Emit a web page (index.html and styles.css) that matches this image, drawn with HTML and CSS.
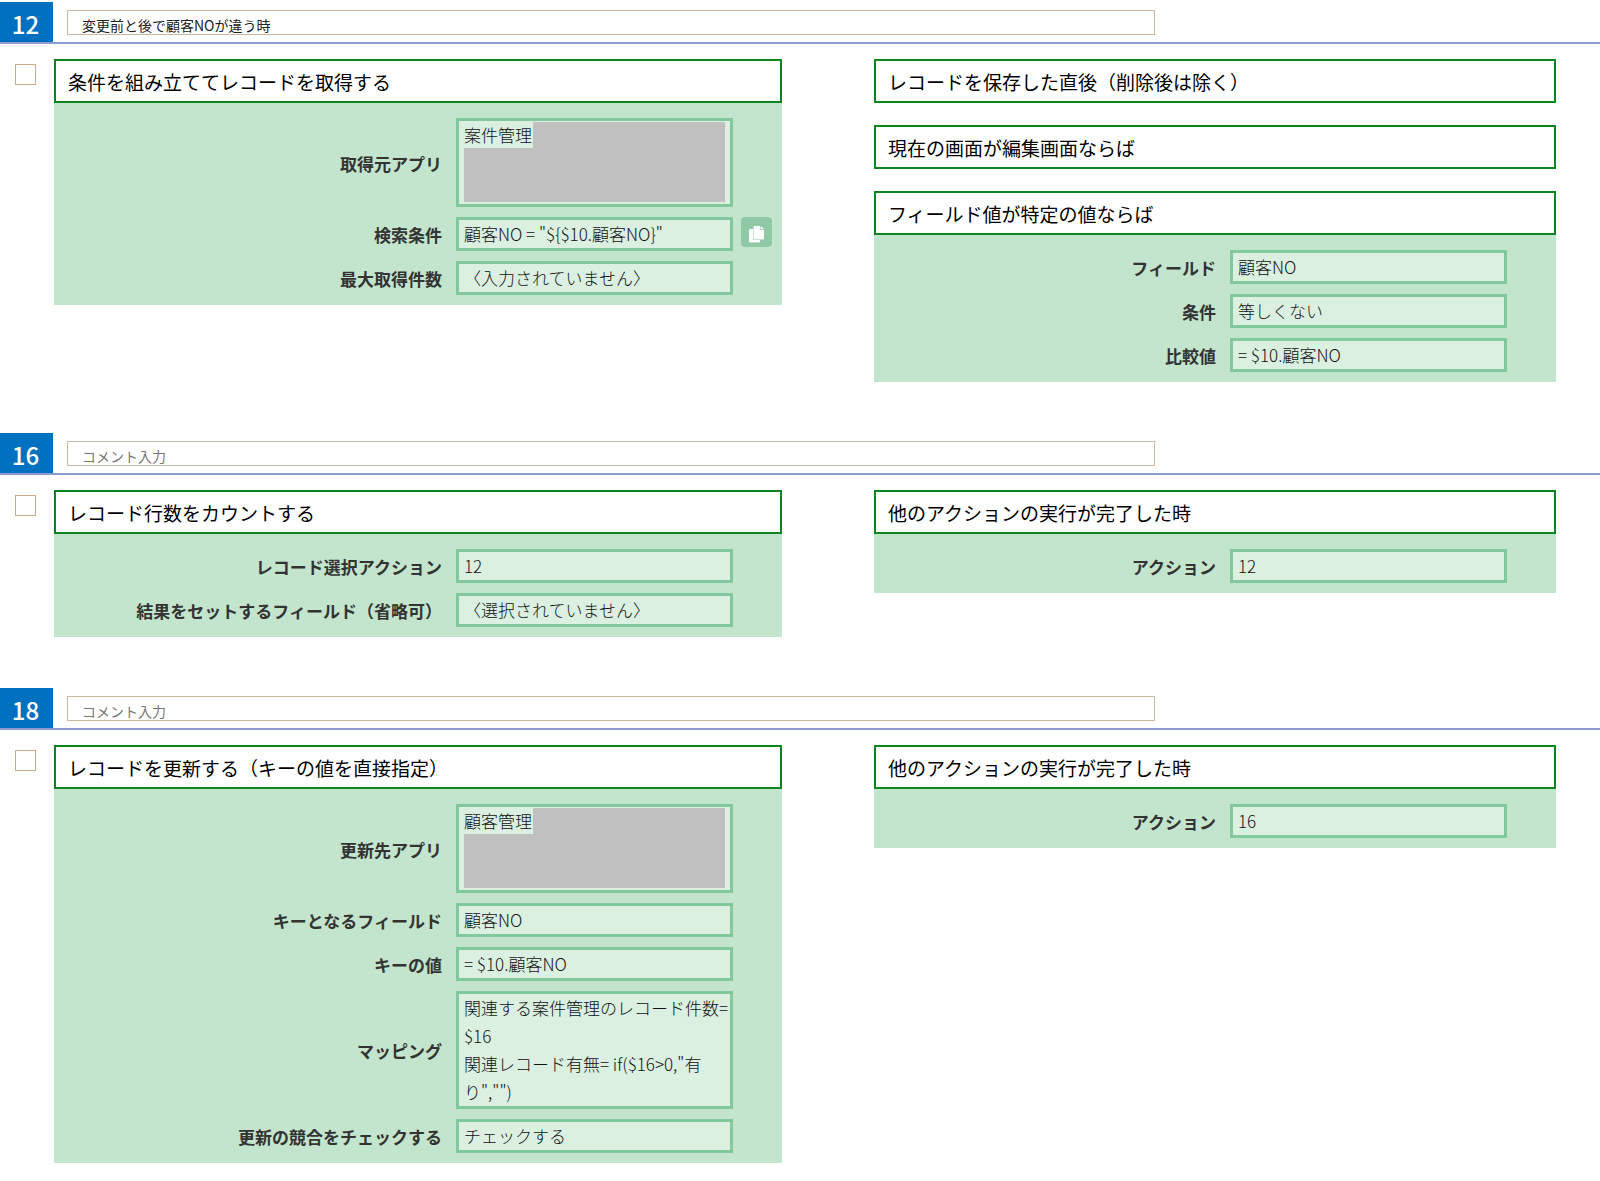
FILE: index.html
```html
<!DOCTYPE html>
<html lang="ja">
<head>
<meta charset="utf-8">
<meta name="viewport" content="width=device-width, initial-scale=1">
<title>アクション設定</title>
<link rel="stylesheet" href="styles.css">
</head>
<body>
<main class="actions">

  <section class="action">
    <header class="action-head">
      <span class="action-number">12</span>
      <input class="comment" type="text" value="変更前と後で顧客NOが違う時" placeholder="コメント入力" aria-label="コメント">
    </header>
    <div class="action-body">
      <input class="pick" type="checkbox" aria-label="12を選択">
      <div class="column">
        <article class="card">
          <h2 class="card-title">条件を組み立ててレコードを取得する</h2>
          <dl class="fields">
            <div class="row">
              <dt class="label">取得元アプリ</dt>
              <dd class="value masked">
                <span class="mask-line"><span class="mask-text">案件管理</span><span class="mask-rest"></span></span>
                <span class="mask-block"></span>
              </dd>
            </div>
            <div class="row">
              <dt class="label">検索条件</dt>
              <dd class="value">顧客NO = "${$10.顧客NO}"</dd>
              <dd class="tool">
                <button class="copy" type="button" aria-label="コピー">
                  <svg width="18" height="20" viewBox="0 0 18 20" aria-hidden="true">
                    <path d="M2 5h3v10a1 1 0 0 0 1 1h6v1.500a1 1 0 0 1-1 1H2a1 1 0 0 1-1-1V6a1 1 0 0 1 1-1z" fill="#fff"/>
                    <path d="M6.500 2H12v4h4v8.500a1 1 0 0 1-1 1H6.500a1 1 0 0 1-1-1V3a1 1 0 0 1 1-1z" fill="#fff"/>
                    <path d="M12.700 2l3.300 3.300h-3.300z" fill="#fff"/>
                  </svg>
                </button>
              </dd>
            </div>
            <div class="row">
              <dt class="label">最大取得件数</dt>
              <dd class="value">〈入力されていません〉</dd>
            </div>
          </dl>
        </article>
      </div>
      <div class="column">
        <article class="card">
          <h2 class="card-title">レコードを保存した直後（削除後は除く）</h2>
        </article>
        <article class="card">
          <h2 class="card-title">現在の画面が編集画面ならば</h2>
        </article>
        <article class="card">
          <h2 class="card-title">フィールド値が特定の値ならば</h2>
          <dl class="fields">
            <div class="row">
              <dt class="label">フィールド</dt>
              <dd class="value">顧客NO</dd>
            </div>
            <div class="row">
              <dt class="label">条件</dt>
              <dd class="value">等しくない</dd>
            </div>
            <div class="row">
              <dt class="label">比較値</dt>
              <dd class="value">= $10.顧客NO</dd>
            </div>
          </dl>
        </article>
      </div>
    </div>
  </section>

  <section class="action">
    <header class="action-head">
      <span class="action-number">16</span>
      <input class="comment" type="text" placeholder="コメント入力" aria-label="コメント">
    </header>
    <div class="action-body">
      <input class="pick" type="checkbox" aria-label="16を選択">
      <div class="column">
        <article class="card">
          <h2 class="card-title">レコード行数をカウントする</h2>
          <dl class="fields">
            <div class="row">
              <dt class="label">レコード選択アクション</dt>
              <dd class="value">12</dd>
            </div>
            <div class="row">
              <dt class="label">結果をセットするフィールド（省略可）</dt>
              <dd class="value">〈選択されていません〉</dd>
            </div>
          </dl>
        </article>
      </div>
      <div class="column">
        <article class="card">
          <h2 class="card-title">他のアクションの実行が完了した時</h2>
          <dl class="fields">
            <div class="row">
              <dt class="label">アクション</dt>
              <dd class="value">12</dd>
            </div>
          </dl>
        </article>
      </div>
    </div>
  </section>

  <section class="action">
    <header class="action-head">
      <span class="action-number">18</span>
      <input class="comment" type="text" placeholder="コメント入力" aria-label="コメント">
    </header>
    <div class="action-body">
      <input class="pick" type="checkbox" aria-label="18を選択">
      <div class="column">
        <article class="card">
          <h2 class="card-title">レコードを更新する（キーの値を直接指定）</h2>
          <dl class="fields">
            <div class="row">
              <dt class="label">更新先アプリ</dt>
              <dd class="value masked">
                <span class="mask-line"><span class="mask-text">顧客管理</span><span class="mask-rest"></span></span>
                <span class="mask-block"></span>
              </dd>
            </div>
            <div class="row">
              <dt class="label">キーとなるフィールド</dt>
              <dd class="value">顧客NO</dd>
            </div>
            <div class="row">
              <dt class="label">キーの値</dt>
              <dd class="value">= $10.顧客NO</dd>
            </div>
            <div class="row">
              <dt class="label">マッピング</dt>
              <dd class="value">関連する案件管理のレコード件数= $16<br>関連レコード有無= if($16&gt;0,"有<wbr>り","")</dd>
            </div>
            <div class="row">
              <dt class="label">更新の競合をチェックする</dt>
              <dd class="value">チェックする</dd>
            </div>
          </dl>
        </article>
      </div>
      <div class="column">
        <article class="card">
          <h2 class="card-title">他のアクションの実行が完了した時</h2>
          <dl class="fields">
            <div class="row">
              <dt class="label">アクション</dt>
              <dd class="value">16</dd>
            </div>
          </dl>
        </article>
      </div>
    </div>
  </section>

</main>
</body>
</html>
```
FILE: styles.css
```css
*,
*::before,
*::after {
  box-sizing: border-box;
}

body {
  margin: 0;
  background: #fff;
  color: #111;
  font-family: "Noto Sans CJK JP", sans-serif;
  font-size: 17px;
}

.actions {
  display: flex;
  flex-direction: column;
  gap: 51px;
  padding: 2px 0 16px;
}

/* Header strip: number badge and comment box over a rule */
.action-head {
  display: flex;
  align-items: flex-start;
  gap: 14px;
  height: 42px;
  border-bottom: 2px solid #8c9cce;
}

.action-number {
  width: 53px;
  height: 40px;
  padding-right: 2px;
  background: #0070c0;
  color: #fff;
  font-size: 24px;
  font-weight: 500;
  line-height: 43px;
  text-align: center;
}

.comment {
  flex: 0 0 68%;
  height: 25px;
  margin: 8px 0 0;
  padding: 4px 14px 0;
  border: 1px solid #cfb8a2;
  border-radius: 0;
  background: #fff;
  color: #222;
  font-family: inherit;
  font-size: 14px;
}

.comment::placeholder {
  color: #777;
  opacity: 1;
}

/* Tick box, action column, spacer, trigger column */
.action-body {
  display: grid;
  grid-template-columns: 54px 728fr 92px 682fr;
  align-items: start;
  padding: 15px 44px 0 0;
}

.pick {
  appearance: none;
  width: 21px;
  height: 21px;
  margin: 5px 0 0 15px;
  border: 1px solid #c8ab8c;
  background: #fff;
}

.column {
  display: flex;
  flex-direction: column;
  gap: 22px;
}

.column:last-child {
  grid-column: 4;
}

.card-title {
  margin: 0;
  padding: 2px 12px 0;
  border: 2px solid #0c8420;
  background: #fff;
  color: #000;
  font-size: 19px;
  font-weight: 400;
  line-height: 38px;
}

.fields {
  display: flex;
  flex-direction: column;
  gap: 10px;
  margin: 0;
  padding: 15px 0 10px;
  background: #c3e5cd;
}

.row {
  display: grid;
  grid-template-columns: 1fr 277px 49px;
  align-items: center;
}

.label {
  padding: 2px 14px 0 0;
  color: #333;
  font-weight: 700;
  line-height: 28px;
  text-align: right;
}

.value {
  margin: 0;
  padding: 0 0 0 5px;
  border: 3px solid #81c99d;
  background: #dbf0e1;
  font-weight: 300;
  line-height: 28px;
}

/* Values whose remainder is blanked out */
.masked {
  display: flex;
  flex-direction: column;
  padding: 1px 5px 2px;
}

.mask-line {
  display: flex;
  height: 26px;
  line-height: 26px;
}

.mask-text {
  width: 69px;
}

.mask-rest {
  flex: 1;
  background: #c0c0c0;
}

.mask-block {
  height: 54px;
  background: #c0c0c0;
}

.tool {
  align-self: start;
  margin: 0;
  padding-left: 8px;
}

.copy {
  display: flex;
  align-items: center;
  justify-content: center;
  width: 31px;
  height: 30px;
  padding: 4px 0 0;
  border: 0;
  border-radius: 4px;
  background: #90c9a6;
}
```
